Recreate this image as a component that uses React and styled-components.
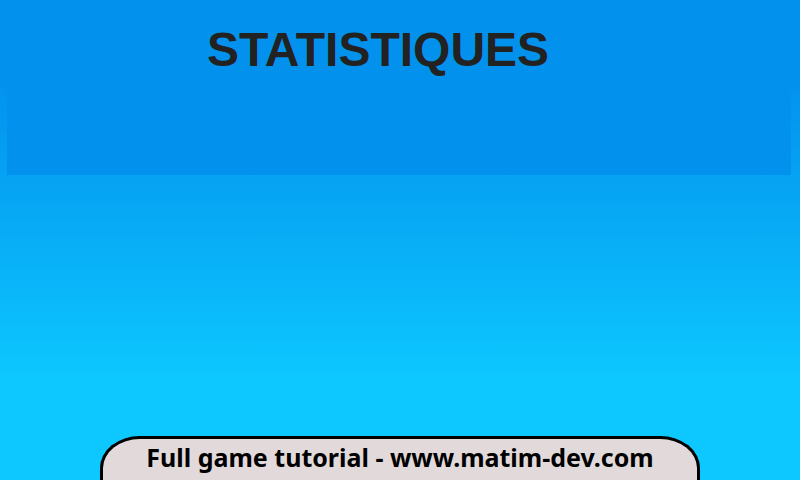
import React from "react";
import styled, { createGlobalStyle } from "styled-components";

const GlobalStyle = createGlobalStyle`
  * { box-sizing: border-box; }
  body { margin: 0; }
`;

const Screen = styled.main`
  min-height: 100vh;
  display: flex;
  flex-direction: column;
  justify-content: space-between;
  overflow: hidden;
  background: linear-gradient(#0292ee 0%, #0292ee 17%, #06a3f3 38%, #0dc8ff 80%, #0dc8ff 100%);
`;

const Header = styled.header`
  margin: 0 9px 0 7px;
  height: 175px;
  padding-top: 20px;
  background: #0292ee;
`;

const Title = styled.h1`
  margin: 0;
  padding-right: 42px;
  text-align: center;
  font: bold 48px/60px "Liberation Sans", Arial, sans-serif;
  color: #222;
`;

const Banner = styled.footer`
  align-self: center;
  width: 75%;
  height: 44px;
  border: 3px solid #000;
  border-bottom: 0;
  border-radius: 40px 40px 0 0 / 32px 32px 0 0;
  background: #e2dada;
  text-align: center;
  font: bold 25px/36px "Noto Sans", "Open Sans", sans-serif;
  color: #000;
  white-space: nowrap;
`;

export default function App() {
  return (
    <Screen>
      <GlobalStyle />
      <Header>
        <Title>STATISTIQUES</Title>
      </Header>
      <Banner>Full game tutorial - www.matim-dev.com</Banner>
    </Screen>
  );
}
